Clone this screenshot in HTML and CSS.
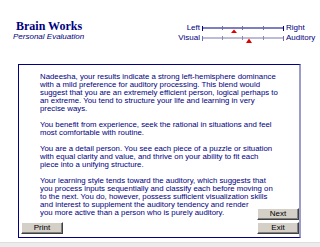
FILE: index.html
```html
<!DOCTYPE html>
<html lang="en">
<head>
  <meta charset="UTF-8">
  <title>Brain Works - Personal Evaluation</title>
  <link rel="stylesheet" href="styles.css">
</head>
<body>
  <header class="top">
    <div class="brand">
      <h1>Brain Works</h1>
      <p>Personal Evaluation</p>
    </div>

    <div class="scales">
      <span class="lbl-left">Left</span>
      <svg class="track" width="84" height="10" viewBox="0 0 84 10">
        <line x1="1" y1="5" x2="83" y2="5" stroke="#000080" stroke-width="1.2"/>
        <line x1="1.5" y1="3" x2="1.5" y2="8" stroke="#000080"/>
        <line x1="21.5" y1="3" x2="21.5" y2="7" stroke="#6f6fa8"/>
        <line x1="41.5" y1="3" x2="41.5" y2="7" stroke="#6f6fa8"/>
        <line x1="62.5" y1="3" x2="62.5" y2="7" stroke="#6f6fa8"/>
        <line x1="82.5" y1="3" x2="82.5" y2="8" stroke="#000080"/>
        <polygon points="30,10 33,6.5 36,10" fill="#e00000"/>
      </svg>
      <span class="lbl-right">Right</span>

      <span class="lbl-left">Visual</span>
      <svg class="track" width="84" height="10" viewBox="0 0 84 10">
        <line x1="1" y1="5" x2="83" y2="5" stroke="#7a7ab4" stroke-width="1.2"/>
        <line x1="1.5" y1="3" x2="1.5" y2="8" stroke="#6f6fa8"/>
        <line x1="21.5" y1="3" x2="21.5" y2="7" stroke="#8a8ab8"/>
        <line x1="41.5" y1="3" x2="41.5" y2="7" stroke="#8a8ab8"/>
        <line x1="62.5" y1="3" x2="62.5" y2="7" stroke="#8a8ab8"/>
        <line x1="82.5" y1="3" x2="82.5" y2="8" stroke="#6f6fa8"/>
        <polygon points="45,10 48,5.5 51,10" fill="#e00000"/>
      </svg>
      <span class="lbl-right">Auditory</span>
    </div>
  </header>

  <main class="report">
    <div class="report-text">
      <p>Nadeesha, your results indicate a strong left-hemisphere dominance<br>
        with a mild preference for auditory processing.  This blend would<br>
        suggest that you are an extremely efficient person, logical perhaps to<br>
        an extreme.  You tend to structure your life and learning in very<br>
        precise ways.</p>
      <p>You benefit from experience, seek the rational in situations and feel<br>
        most comfortable with routine.</p>
      <p>You are a detail person.  You see each piece of a puzzle or situation<br>
        with equal clarity and value, and thrive on your ability to fit each<br>
        piece into a unifying structure.</p>
      <p>Your learning style tends toward the auditory, which suggests that<br>
        you process inputs sequentially and classify each before moving on<br>
        to the next.  You do, however, possess sufficient visualization skills<br>
        and interest to supplement the auditory tendency and render<br>
        you more active than a person who is purely auditory.</p>
    </div>

    <button class="btn btn-print">Print</button>
    <div class="nav-buttons">
      <button class="btn">Next</button>
      <button class="btn">Exit</button>
    </div>
  </main>

  <footer class="status"></footer>
</body>
</html>
```

FILE: styles.css
```css
/* Base */
body {
  margin: 0;
  background: #fff;
  color: #000080;
  font-family: "Liberation Sans", Arial, sans-serif;
}

/* Header */
.top {
  display: flex;
  justify-content: space-between;
  padding: 19px 0 0 16px;
  height: 46px;
  box-sizing: border-box;
}

.brand h1 {
  margin: 0;
  font-family: "Liberation Serif", "Times New Roman", serif;
  font-size: 12px;
  line-height: 14px;
  font-weight: bold;
  color: #000080;
}

.brand p {
  margin: 0 0 0 -3px;
  font-size: 8px;
  line-height: 8px;
  font-style: italic;
  color: #000080;
}

.scales {
  display: grid;
  grid-template-columns: 24px 84px 35px;
  grid-auto-rows: 10px;
  align-items: center;
  margin-top: 4px;
  font-size: 8px;
  line-height: 10px;
}

.lbl-left {
  justify-self: end;
  padding-right: 1px;
}

.lbl-right {
  padding-left: 1px;
}

.track {
  display: block;
}

/* Report box */
.report {
  position: relative;
  margin: 18px 0 4px 18px;
  width: 283px;
  height: 174px;
  box-sizing: border-box;
  border: 1px solid #000080;
  border-right: 2px solid #9c9cc8;
  padding: 8px 10px 0 21px;
}

.report-text {
  font-size: 7.8px;
  line-height: 8px;
}

.report-text p {
  margin: 0 0 8px;
}

/* Buttons */
.btn {
  display: block;
  width: 42px;
  height: 12px;
  padding: 0;
  background: #d4d0c8;
  border: 1px solid;
  border-color: #fff #404040 #404040 #fff;
  box-shadow: inset -1px -1px 0 #808080;
  font-family: "Liberation Sans", Arial, sans-serif;
  font-size: 8px;
  line-height: 10px;
  color: #000;
}

.btn-print {
  position: absolute;
  left: 2px;
  bottom: 3px;
}

.nav-buttons {
  position: absolute;
  right: 0;
  bottom: 3px;
  display: flex;
  flex-direction: column;
  gap: 2px;
}

/* Bottom strip */
.status {
  height: 6px;
  background: #ececec;
  border-top: 1px solid #dedede;
}
```
